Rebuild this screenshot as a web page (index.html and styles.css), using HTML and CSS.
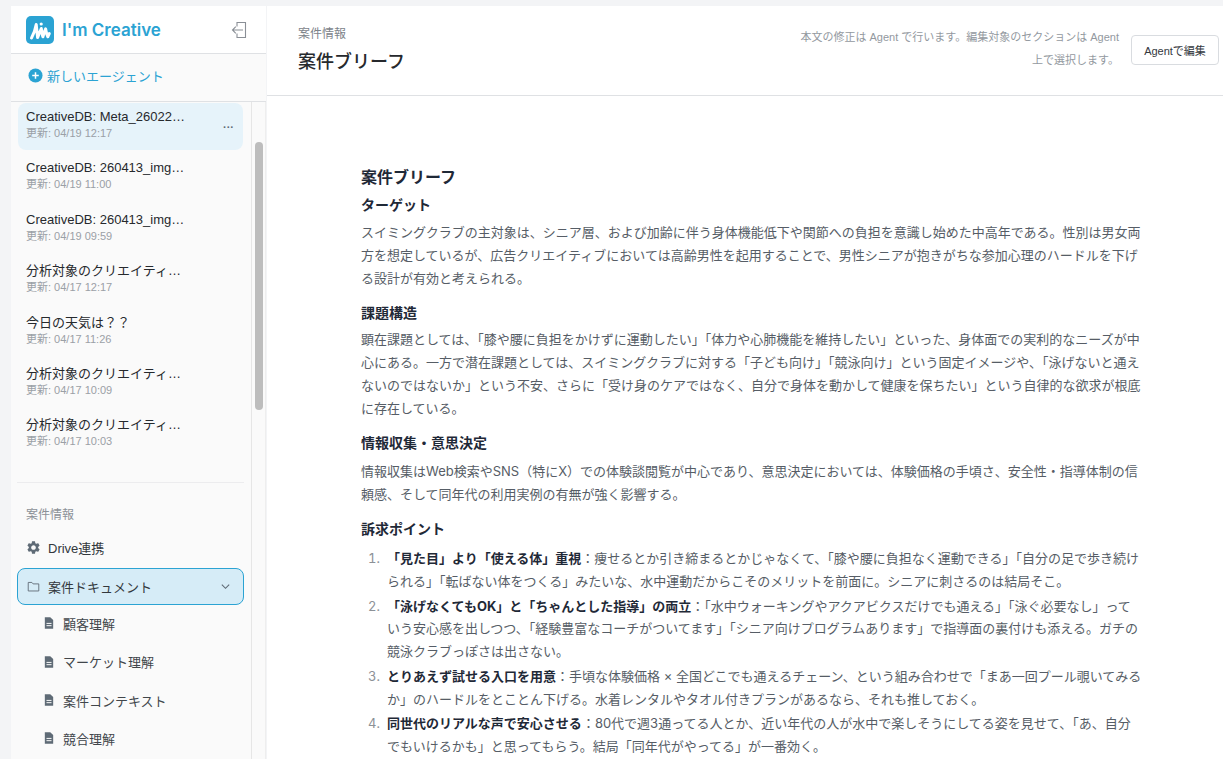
FILE: index.html
```html
<!DOCTYPE html>
<html lang="ja">
<head>
<meta charset="utf-8">
<title>案件ブリーフ</title>
<link rel="stylesheet" href="styles.css">
</head>
<body>
<div class="app">
  <aside class="sidebar">
    <div class="brand">
      <svg class="logo" viewBox="0 0 28 28" width="28" height="28">
        <rect width="28" height="28" rx="5" fill="#2ba3d3"/>
        <path d="M5.500 22C7.800 18 9.300 13.500 10.200 8.500L11.600 21.500C12.800 19 14 15.500 15.300 12.500C15.800 15.500 16 18 16.900 20.800C17.600 18.200 18.400 15.500 19.600 12.800C20.200 15.500 20.500 18.500 21.800 20.800C22.400 19.500 22.800 18.500 23.300 17.500" fill="none" stroke="#fff" stroke-width="3" stroke-linecap="round" stroke-linejoin="round"/>
        <circle cx="15.200" cy="8" r="1.600" fill="#fff"/>
      </svg>
      <span class="brand-name">I'm Creative</span>
      <svg class="exit" viewBox="0 0 16 16" width="16" height="16" fill="none" stroke="#8a8f96" stroke-width="1.100">
        <path d="M6 4.500V.5H14.500V15.500H6V11.500"/>
        <path d="M12 8H1.500M4.800 4.700L1.500 8L4.800 11.300"/>
      </svg>
    </div>
    <div class="new-agent">
      <svg viewBox="0 0 16 16" width="15" height="15"><circle cx="8" cy="8" r="7.500" fill="#2ba3d3"/><path d="M8 4.500V11.500M4.500 8H11.500" stroke="#fff" stroke-width="1.600"/></svg>
      <span>新しいエージェント</span>
    </div>
    <div class="side-body">
      <div class="side-scroll">
        <ul class="threads">
          <li class="thread active"><div class="t-text"><div class="t-title">CreativeDB: Meta_26022…</div><div class="t-date">更新: 04/19 12:17</div></div><span class="t-more">···</span></li>
          <li class="thread"><div class="t-text"><div class="t-title">CreativeDB: 260413_img…</div><div class="t-date">更新: 04/19 11:00</div></div></li>
          <li class="thread"><div class="t-text"><div class="t-title">CreativeDB: 260413_img…</div><div class="t-date">更新: 04/19 09:59</div></div></li>
          <li class="thread"><div class="t-text"><div class="t-title">分析対象のクリエイティ…</div><div class="t-date">更新: 04/17 12:17</div></div></li>
          <li class="thread"><div class="t-text"><div class="t-title">今日の天気は？？</div><div class="t-date">更新: 04/17 11:26</div></div></li>
          <li class="thread"><div class="t-text"><div class="t-title">分析対象のクリエイティ…</div><div class="t-date">更新: 04/17 10:09</div></div></li>
          <li class="thread"><div class="t-text"><div class="t-title">分析対象のクリエイティ…</div><div class="t-date">更新: 04/17 10:03</div></div></li>
        </ul>
        <div class="side-rule"></div>
        <div class="side-label">案件情報</div>
        <div class="nav-item drive">
          <svg viewBox="2 2 20 20" width="13" height="13" fill="#5f6b76"><path d="M19.140 12.940c.04-.3.06-.61.06-.94 0-.32-.02-.64-.07-.94l2.030-1.580c.18-.14.23-.41.12-.61l-1.920-3.320c-.12-.22-.37-.29-.59-.22l-2.390.96c-.5-.38-1.030-.7-1.620-.94l-.36-2.540c-.04-.24-.24-.41-.48-.41h-3.840c-.24 0-.43.17-.47.41l-.36 2.540c-.59.24-1.130.57-1.620.94l-2.390-.96c-.22-.08-.47 0-.59.22L2.740 8.870c-.12.21-.08.47.12.61l2.030 1.580c-.05.3-.09.63-.09.94s.02.64.07.94l-2.030 1.580c-.18.14-.23.41-.12.61l1.920 3.320c.12.22.37.29.59.22l2.390-.96c.5.38 1.030.7 1.620.94l.36 2.540c.05.24.24.41.48.41h3.840c.24 0 .44-.17.47-.41l.36-2.540c.59-.24 1.130-.56 1.620-.94l2.390.96c.22.08.47 0 .59-.22l1.920-3.320c.12-.22.07-.47-.12-.61l-2.010-1.580zM12 15.600c-1.980 0-3.600-1.620-3.600-3.600s1.620-3.600 3.600-3.600 3.600 1.620 3.600 3.600-1.620 3.600-3.600 3.600z"/></svg>
          <span>Drive連携</span>
        </div>
        <div class="nav-item open">
          <svg viewBox="0 0 16 16" width="13" height="13" fill="none" stroke="#5f6b76" stroke-width="1.100"><path d="M1.500 13.500V3H6L7.500 4.800H14.500V13.500Z" stroke-linejoin="round"/></svg>
          <span class="nav-grow">案件ドキュメント</span>
          <svg viewBox="0 0 12 12" width="11" height="11" fill="none" stroke="#5f6b76" stroke-width="1.200"><path d="M2 4L6 8L10 4"/></svg>
        </div>
        <div class="sub-item"><svg class="doc" viewBox="0 0 12 14" width="10" height="12"><path d="M1 0H7.500L11 3.500V14H1Z" fill="#5f6b76"/><path d="M3 7.500H9M3 10.200H9" stroke="#fafafa" stroke-width="1.200"/></svg><span>顧客理解</span></div>
        <div class="sub-item"><svg class="doc" viewBox="0 0 12 14" width="10" height="12"><path d="M1 0H7.500L11 3.500V14H1Z" fill="#5f6b76"/><path d="M3 7.500H9M3 10.200H9" stroke="#fafafa" stroke-width="1.200"/></svg><span>マーケット理解</span></div>
        <div class="sub-item"><svg class="doc" viewBox="0 0 12 14" width="10" height="12"><path d="M1 0H7.500L11 3.500V14H1Z" fill="#5f6b76"/><path d="M3 7.500H9M3 10.200H9" stroke="#fafafa" stroke-width="1.200"/></svg><span>案件コンテキスト</span></div>
        <div class="sub-item"><svg class="doc" viewBox="0 0 12 14" width="10" height="12"><path d="M1 0H7.500L11 3.500V14H1Z" fill="#5f6b76"/><path d="M3 7.500H9M3 10.200H9" stroke="#fafafa" stroke-width="1.200"/></svg><span>競合理解</span></div>
      </div>
      <div class="gutter"><div class="thumb"></div></div>
    </div>
  </aside>
  <main class="main">
    <header class="top">
      <div class="top-titles">
        <div class="crumb">案件情報</div>
        <h1 class="page-title">案件ブリーフ</h1>
      </div>
      <div class="top-actions">
        <p class="top-note">本文の修正は Agent で行います。編集対象のセクションは Agent 上で選択します。</p>
        <button class="edit-btn">Agentで編集</button>
      </div>
    </header>
    <article class="doc-body">
      <h2>案件ブリーフ</h2>
      <h3>ターゲット</h3>
      <p>スイミングクラブの主対象は、シニア層、および加齢に伴う身体機能低下や関節への負担を意識し始めた中高年である。性別は男女両方を想定しているが、広告クリエイティブにおいては高齢男性を起用することで、男性シニアが抱きがちな参加心理のハードルを下げる設計が有効と考えられる。</p>
      <h3>課題構造</h3>
      <p>顕在課題としては、「膝や腰に負担をかけずに運動したい」「体力や心肺機能を維持したい」といった、身体面での実利的なニーズが中心にある。一方で潜在課題としては、スイミングクラブに対する「子ども向け」「競泳向け」という固定イメージや、「泳げないと通えないのではないか」という不安、さらに「受け身のケアではなく、自分で身体を動かして健康を保ちたい」という自律的な欲求が根底に存在している。</p>
      <h3>情報収集・意思決定</h3>
      <p class="p-wide">情報収集はWeb検索やSNS（特にX）での体験談閲覧が中心であり、意思決定においては、体験価格の手頃さ、安全性・指導体制の信頼感、そして同年代の利用実例の有無が強く影響する。</p>
      <h3>訴求ポイント</h3>
      <ol>
        <li><strong>「見た目」より「使える体」重視</strong>：痩せるとか引き締まるとかじゃなくて、「膝や腰に負担なく運動できる」「自分の足で歩き続けられる」「転ばない体をつくる」みたいな、水中運動だからこそのメリットを前面に。シニアに刺さるのは結局そこ。</li>
        <li><strong>「泳げなくてもOK」と「ちゃんとした指導」の両立</strong>：「水中ウォーキングやアクアビクスだけでも通える」「泳ぐ必要なし」っていう安心感を出しつつ、「経験豊富なコーチがついてます」「シニア向けプログラムあります」で指導面の裏付けも添える。ガチの競泳クラブっぽさは出さない。</li>
        <li><strong>とりあえず試せる入口を用意</strong>：手頃な体験価格 × 全国どこでも通えるチェーン、という組み合わせで「まあ一回プール覗いてみるか」のハードルをとことん下げる。水着レンタルやタオル付きプランがあるなら、それも推しておく。</li>
        <li><strong>同世代のリアルな声で安心させる</strong>：80代で週3通ってる人とか、近い年代の人が水中で楽しそうにしてる姿を見せて、「あ、自分でもいけるかも」と思ってもらう。結局「同年代がやってる」が一番効く。</li>
      </ol>
    </article>
  </main>
</div>
</body>
</html>
```

FILE: styles.css
```css
* { box-sizing: border-box; }
html, body { margin: 0; height: 100%; overflow: hidden; }
body {
  background: #f3f4f6;
  font-family: "Liberation Sans", "Noto Sans CJK JP", sans-serif;
  color: #1f2328;
}
.app { display: flex; height: 759px; padding: 6px 0 0 11px; gap: 1px; }

/* sidebar */
.sidebar {
  width: 255px;
  flex: none;
  display: flex;
  flex-direction: column;
  background: #fafafa;
  min-height: 0;
}
.brand {
  height: 48px;
  flex: none;
  display: flex;
  align-items: center;
  padding: 0 19px 0 15px;
  background: #fff;
  border-bottom: 1px solid #dfe1e4;
}
.logo { flex: none; }
.brand-name {
  flex: 1;
  margin-left: 8px;
  font-family: "Inter", "Liberation Sans", sans-serif;
  font-size: 17px;
  font-weight: 600;
  color: #2ba3d3;
}
.new-agent {
  height: 48px;
  flex: none;
  display: flex;
  align-items: center;
  gap: 4px;
  padding: 0 0 4px 17px;
  font-size: 13px;
  color: #2ba3d3;
  border-bottom: 1px solid #dfe1e4;
}
.side-body { flex: 1; min-height: 0; display: flex; overflow: hidden; }
.side-scroll { flex: 1; min-width: 0; padding: 1px 7px 0 6px; overflow: hidden; }
.gutter {
  flex: none;
  width: 15px;
  background: #fafafa;
  border-left: 1px solid #e6e6e6;
  border-right: 1px solid #eeeeee;
  padding: 40px 2px 0 3px;
}
.thumb { height: 268px; border-radius: 4px; background: #bdbdbd; }

.threads { list-style: none; margin: 0; padding: 0; }
.thread {
  height: 47px;
  margin: 0 1px 4.400px;
  padding: 0 9px 0 8px;
  border-radius: 8px;
  display: flex;
  align-items: center;
}
.thread.active { background: #e6f3fa; }
.t-text { flex: 1; min-width: 0; padding-bottom: 4px; }
.t-title { font-size: 13px; line-height: 17px; color: #26292d; white-space: nowrap; }
.t-date { font-size: 11px; line-height: 15px; margin-top: 1px; color: #9aa0a6; }
.t-more { font-size: 11px; font-weight: 700; color: #5f6b76; }

.side-rule { height: 1px; background: #ececee; margin-top: 24px; }
.side-label { font-size: 12px; line-height: 16px; color: #8c9197; margin: 24px 0 0 9px; }
.nav-item {
  height: 37px;
  display: flex;
  align-items: center;
  gap: 8px;
  padding: 0 12px 0 10px;
  font-size: 13px;
  color: #33383d;
}
.drive { margin-top: 6px; margin-bottom: 2px; }
.nav-item.open {
  background: #d6ecf7;
  border: 1px solid #2ba3d3;
  border-radius: 8px;
  padding-left: 9px;
}
.nav-grow { flex: 1; }
.sub-item {
  height: 38.300px;
  display: flex;
  align-items: center;
  gap: 9px;
  padding: 0 0 2px 27px;
  font-size: 13px;
  color: #41464b;
}
.doc { flex: none; }

/* main */
.main { flex: 1; min-width: 0; background: #fff; overflow: hidden; display: flex; flex-direction: column; }
.top {
  height: 90px;
  flex: none;
  display: flex;
  justify-content: space-between;
  padding: 0 4px 0 31px;
  border-bottom: 1px solid #dfe1e4;
}
.crumb { font-size: 12px; line-height: 16px; color: #7d838a; margin-top: 20px; }
.page-title { margin: 8px 0 0; font-size: 18px; line-height: 24px; font-weight: 500; color: #26292d; }
.top-actions { display: flex; align-items: flex-start; gap: 12px; }
.top-note {
  width: 320px;
  margin: 20px 0 0;
  font-size: 11px;
  line-height: 23px;
  text-align: right;
  color: #9399a0;
}
.edit-btn {
  width: 88px;
  height: 30px;
  margin-top: 29px;
  padding: 0;
  background: #fff;
  border: 1px solid #d9dce0;
  border-radius: 4px;
  font-family: inherit;
  font-size: 11px;
  color: #33383d;
}

.doc-body {
  width: 782px;
  margin-left: 94px;
  padding-top: 69px;
  font-family: "Inter", "Noto Sans CJK JP", sans-serif;
  font-size: 13px;
  line-height: 23px;
  color: #565d66;
}
.doc-body h2 { margin: 0; font-size: 16px; line-height: 24px; font-weight: 700; color: #1f2937; }
.doc-body h3 { margin: 0; font-size: 14px; line-height: 23px; font-weight: 700; color: #1f2937; }
.doc-body h2 + h3 { margin-top: 4px; }
.doc-body p { margin: 4px 0 11px; }
.doc-body h2 + h3 + p { margin-top: 5px; }
.doc-body .p-wide { margin-top: 6px; }
.doc-body ol { margin: 7px 0 0; padding-left: 26px; line-height: 22.750px; }
.doc-body li { margin-bottom: 2px; }
.doc-body li::marker { content: counter(list-item) ".\00a0\00a0"; color: #8c9197; }
.doc-body strong { font-weight: 700; color: #1f2937; }
```
